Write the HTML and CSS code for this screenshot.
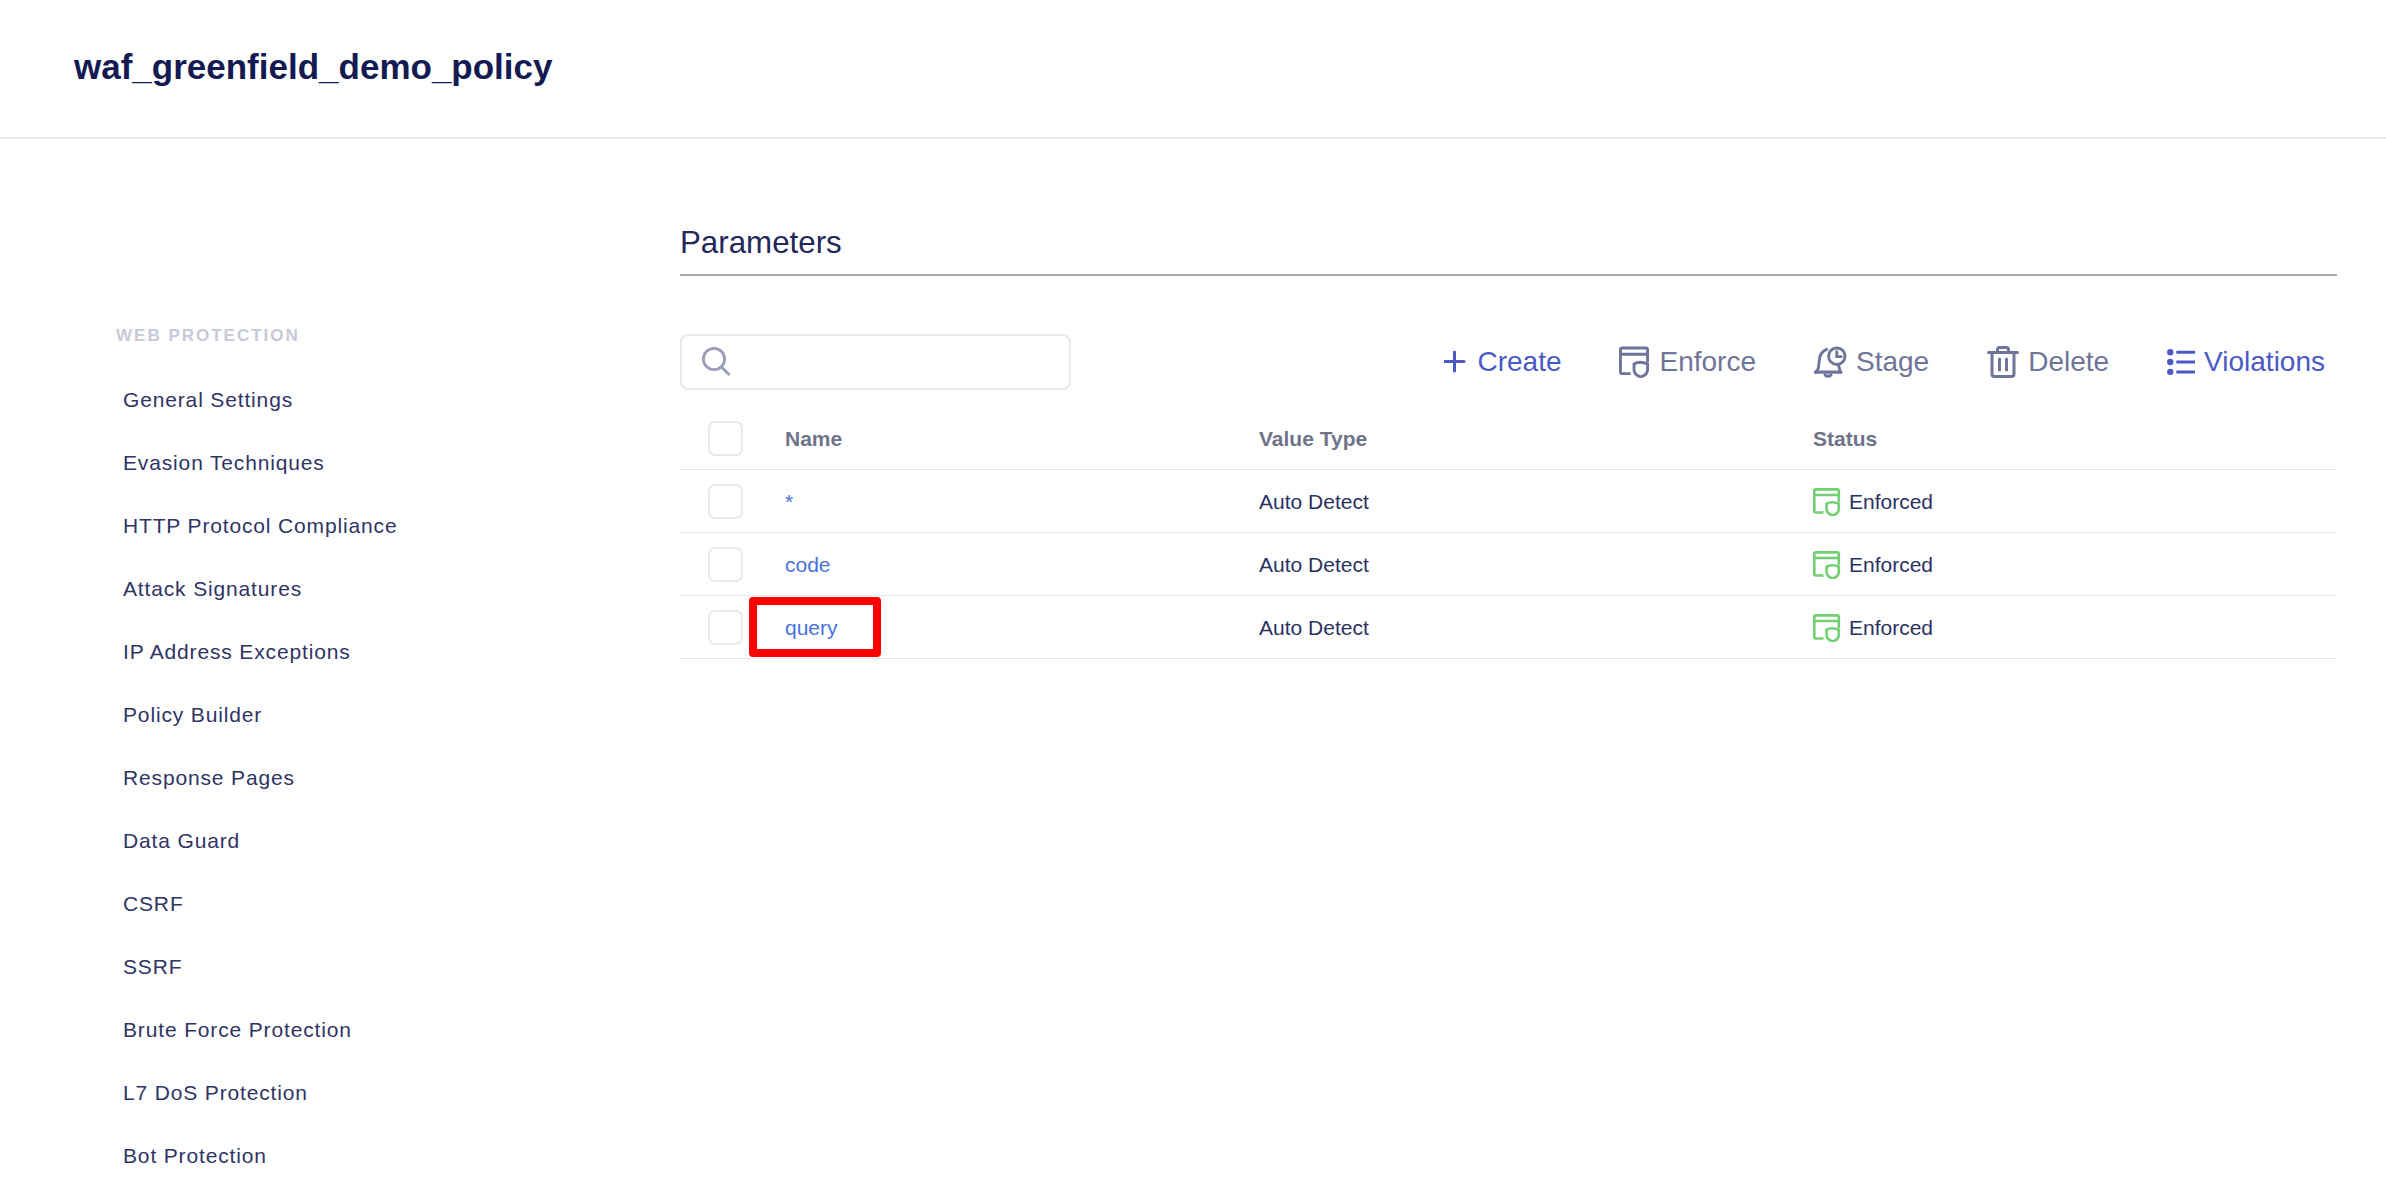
FILE: index.html
```html
<!DOCTYPE html>
<html>
<head>
    <title>waf_greenfield_demo_policy</title>
    <link rel="stylesheet" href="styles.css">
</head>
<body>
    <div class="page-header">
        <h1>waf_greenfield_demo_policy</h1>
    </div>

    <div class="page-body">
        <div class="sidebar">
            <div class="sidebar-title">WEB PROTECTION</div>
            <a class="side-link">General Settings</a>
            <a class="side-link">Evasion Techniques</a>
            <a class="side-link">HTTP Protocol Compliance</a>
            <a class="side-link">Attack Signatures</a>
            <a class="side-link">IP Address Exceptions</a>
            <a class="side-link">Policy Builder</a>
            <a class="side-link">Response Pages</a>
            <a class="side-link">Data Guard</a>
            <a class="side-link">CSRF</a>
            <a class="side-link">SSRF</a>
            <a class="side-link">Brute Force Protection</a>
            <a class="side-link">L7 DoS Protection</a>
            <a class="side-link">Bot Protection</a>
        </div>

        <div class="content">
            <h2>Parameters</h2>

            <div class="toolbar">
                <div class="search-box">
                    <svg width="30" height="30" viewBox="0 0 30 30" fill="none" stroke="#9a9cb8" stroke-width="2.8">
                        <circle cx="12" cy="12" r="10.600"/>
                        <path d="M19.500 20l8 8"/>
                    </svg>
                </div>
                <div class="actions">
                    <a class="action primary">
                        <svg class="plus-icon" width="24" height="24" viewBox="0 0 24 24" fill="none" stroke="#4a59c4" stroke-width="3" stroke-linecap="round">
                            <path d="M10.500 2v19M1 11.500h19"/>
                        </svg>
                        Create
                    </a>
                    <a class="action">
                        <svg width="31" height="32" viewBox="0 0 32 32" fill="none" stroke="#6f7498" stroke-width="3">
                            <path d="M12 28H3a1.500 1.500 0 0 1-1.500-1.500V3A1.500 1.500 0 0 1 3 1.500h25A1.500 1.500 0 0 1 29.500 3v13M2 8h27"/>
                            <path d="M15.500 18q6-3.500 14 0v6q0 5-7 7.500q-7-2.500-7-7.500z" fill="#fff"/>
                        </svg>
                        Enforce
                    </a>
                    <a class="action">
                        <svg width="33" height="32" viewBox="0 0 34 32" fill="none" stroke="#6f7498" stroke-width="3" stroke-linecap="round">
                            <path d="M13 3q-7 3-7.500 11l-1 8q-.5 3-3 4.500"/>
                            <path d="M1.500 26.500h26" stroke-width="3.400"/>
                            <path d="M25.500 19l.500 3q.5 3 1.500 4.500"/>
                            <path d="M11.500 29.500q3 2.500 6 0"/>
                            <circle cx="23.500" cy="10" r="8.500" fill="#fff"/>
                            <path d="M23.500 5.500V10.500h4.500"/>
                        </svg>
                        Stage
                    </a>
                    <a class="action">
                        <svg width="32" height="32" viewBox="0 0 32 32" fill="none" stroke="#6f7498" stroke-width="3" stroke-linecap="round">
                            <path d="M1.500 6.500h29"/>
                            <path d="M10.500 6V3.500q0-2 2-2h7q2 0 2 2V6"/>
                            <path d="M5 7v21q0 2.500 2.500 2.500h17q2.500 0 2.500-2.500V7"/>
                            <path d="M12.500 13v11M19.500 13v11"/>
                        </svg>
                        Delete
                    </a>
                    <a class="action primary">
                        <svg width="28" height="28" viewBox="0 0 30 28" fill="#4a59c4">
                            <circle cx="3.500" cy="3.500" r="3.400"/>
                            <circle cx="3.500" cy="14" r="3.400"/>
                            <circle cx="3.500" cy="24.500" r="3.400"/>
                            <path d="M10 2h20v3.200H10zM10 12.500h20v3.200H10zM10 23h20v3.200H10z"/>
                        </svg>
                        Violations
                    </a>
                </div>
            </div>

            <div class="table">
                <div class="table-row table-head">
                    <div class="check-cell"><span class="checkbox"></span></div>
                    <div class="name-cell">Name</div>
                    <div class="type-cell">Value Type</div>
                    <div>Status</div>
                </div>
                <div class="table-row">
                    <div class="check-cell"><span class="checkbox"></span></div>
                    <div class="name-cell"><a class="param-link">*</a></div>
                    <div class="type-cell">Auto Detect</div>
                    <div class="status-cell">
                        <svg width="28" height="28" viewBox="0 0 32 32" fill="none" stroke="#72cf72" stroke-width="3">
                            <path d="M12 28H3a1.500 1.500 0 0 1-1.500-1.500V3A1.500 1.500 0 0 1 3 1.500h25A1.500 1.500 0 0 1 29.500 3v13M2 8h27"/>
                            <path d="M15.500 18q6-3.500 14 0v6q0 5-7 7.500q-7-2.500-7-7.500z" fill="#fff"/>
                        </svg>
                        Enforced
                    </div>
                </div>
                <div class="table-row">
                    <div class="check-cell"><span class="checkbox"></span></div>
                    <div class="name-cell"><a class="param-link">code</a></div>
                    <div class="type-cell">Auto Detect</div>
                    <div class="status-cell">
                        <svg width="28" height="28" viewBox="0 0 32 32" fill="none" stroke="#72cf72" stroke-width="3">
                            <path d="M12 28H3a1.500 1.500 0 0 1-1.500-1.500V3A1.500 1.500 0 0 1 3 1.500h25A1.500 1.500 0 0 1 29.500 3v13M2 8h27"/>
                            <path d="M15.500 18q6-3.500 14 0v6q0 5-7 7.500q-7-2.500-7-7.500z" fill="#fff"/>
                        </svg>
                        Enforced
                    </div>
                </div>
                <div class="table-row">
                    <div class="check-cell"><span class="checkbox"></span></div>
                    <div class="name-cell">
                        <a class="param-link">query</a>
                        <span class="red-box"></span>
                    </div>
                    <div class="type-cell">Auto Detect</div>
                    <div class="status-cell">
                        <svg width="28" height="28" viewBox="0 0 32 32" fill="none" stroke="#72cf72" stroke-width="3">
                            <path d="M12 28H3a1.500 1.500 0 0 1-1.500-1.500V3A1.500 1.500 0 0 1 3 1.500h25A1.500 1.500 0 0 1 29.500 3v13M2 8h27"/>
                            <path d="M15.500 18q6-3.500 14 0v6q0 5-7 7.500q-7-2.500-7-7.500z" fill="#fff"/>
                        </svg>
                        Enforced
                    </div>
                </div>
            </div>
        </div>
    </div>
</body>
</html>
```

FILE: styles.css
```css
html, body {
    margin: 0;
    height: 100%;
    overflow: hidden;
}
body {
    font-family: "Liberation Sans", Arial, sans-serif;
    background-color: #fff;
    color: #2c3163;
}
.page-header {
    height: 137px;
    padding-left: 74px;
    border-bottom: 2px solid #e8e9f3;
    display: flex;
    align-items: center;
}
h1 {
    margin: 0 0 3px;
    font-size: 35px;
    font-weight: bold;
    color: #141b52;
}
.page-body {
    display: flex;
}
.sidebar {
    width: 680px;
    flex-shrink: 0;
    padding: 187px 0 0 116px;
    box-sizing: border-box;
}
.sidebar-title {
    font-size: 17px;
    font-weight: bold;
    letter-spacing: 2px;
    color: #c8c9d8;
    line-height: 20px;
    margin-bottom: 22px;
}
.side-link {
    display: block;
    height: 63px;
    line-height: 63px;
    padding-left: 7px;
    font-size: 21px;
    letter-spacing: 0.85px;
    color: #2f3465;
}
.content {
    flex: 1;
    padding: 65px 49px 0 0;
}
h2 {
    margin: 0;
    height: 70px;
    line-height: 78px;
    font-size: 31.3px;
    font-weight: normal;
    color: #23285c;
    border-bottom: 2px solid #a9a9ad;
}
.toolbar {
    display: flex;
    justify-content: space-between;
    align-items: center;
    margin-top: 58px;
}
.search-box {
    width: 391px;
    height: 56px;
    box-sizing: border-box;
    border: 2px solid #e8e8f1;
    border-radius: 8px;
    padding-left: 20px;
    display: flex;
    align-items: center;
}
.actions {
    display: flex;
    gap: 58px;
    padding-right: 12px;
}
.action {
    display: flex;
    align-items: center;
    gap: 9px;
    font-size: 28px;
    color: #6f7498;
}
.action.primary {
    color: #4a59c4;
}
.table {
    margin-top: 17px;
}
.table-row {
    display: grid;
    grid-template-columns: 105px 474px 554px 1fr;
    height: 61px;
    padding-top: 1px;
    align-items: center;
    border-bottom: 1px solid #e4e5ee;
    font-size: 21px;
}
.table-head {
    font-weight: bold;
    color: #6e7389;
}
.check-cell {
    padding-left: 28px;
    display: flex;
}
.checkbox {
    width: 35px;
    height: 35px;
    box-sizing: border-box;
    border: 2px solid #e8e8f1;
    border-radius: 7px;
    background-color: #fff;
}
.name-cell {
    position: relative;
}
.param-link {
    color: #4a72dc;
}
.status-cell {
    display: flex;
    align-items: center;
    gap: 8px;
}
.red-box {
    position: absolute;
    left: -36px;
    top: -19px;
    width: 132px;
    height: 60px;
    box-sizing: border-box;
    border: 8px solid #ff0000;
    border-radius: 4px;
}
```
